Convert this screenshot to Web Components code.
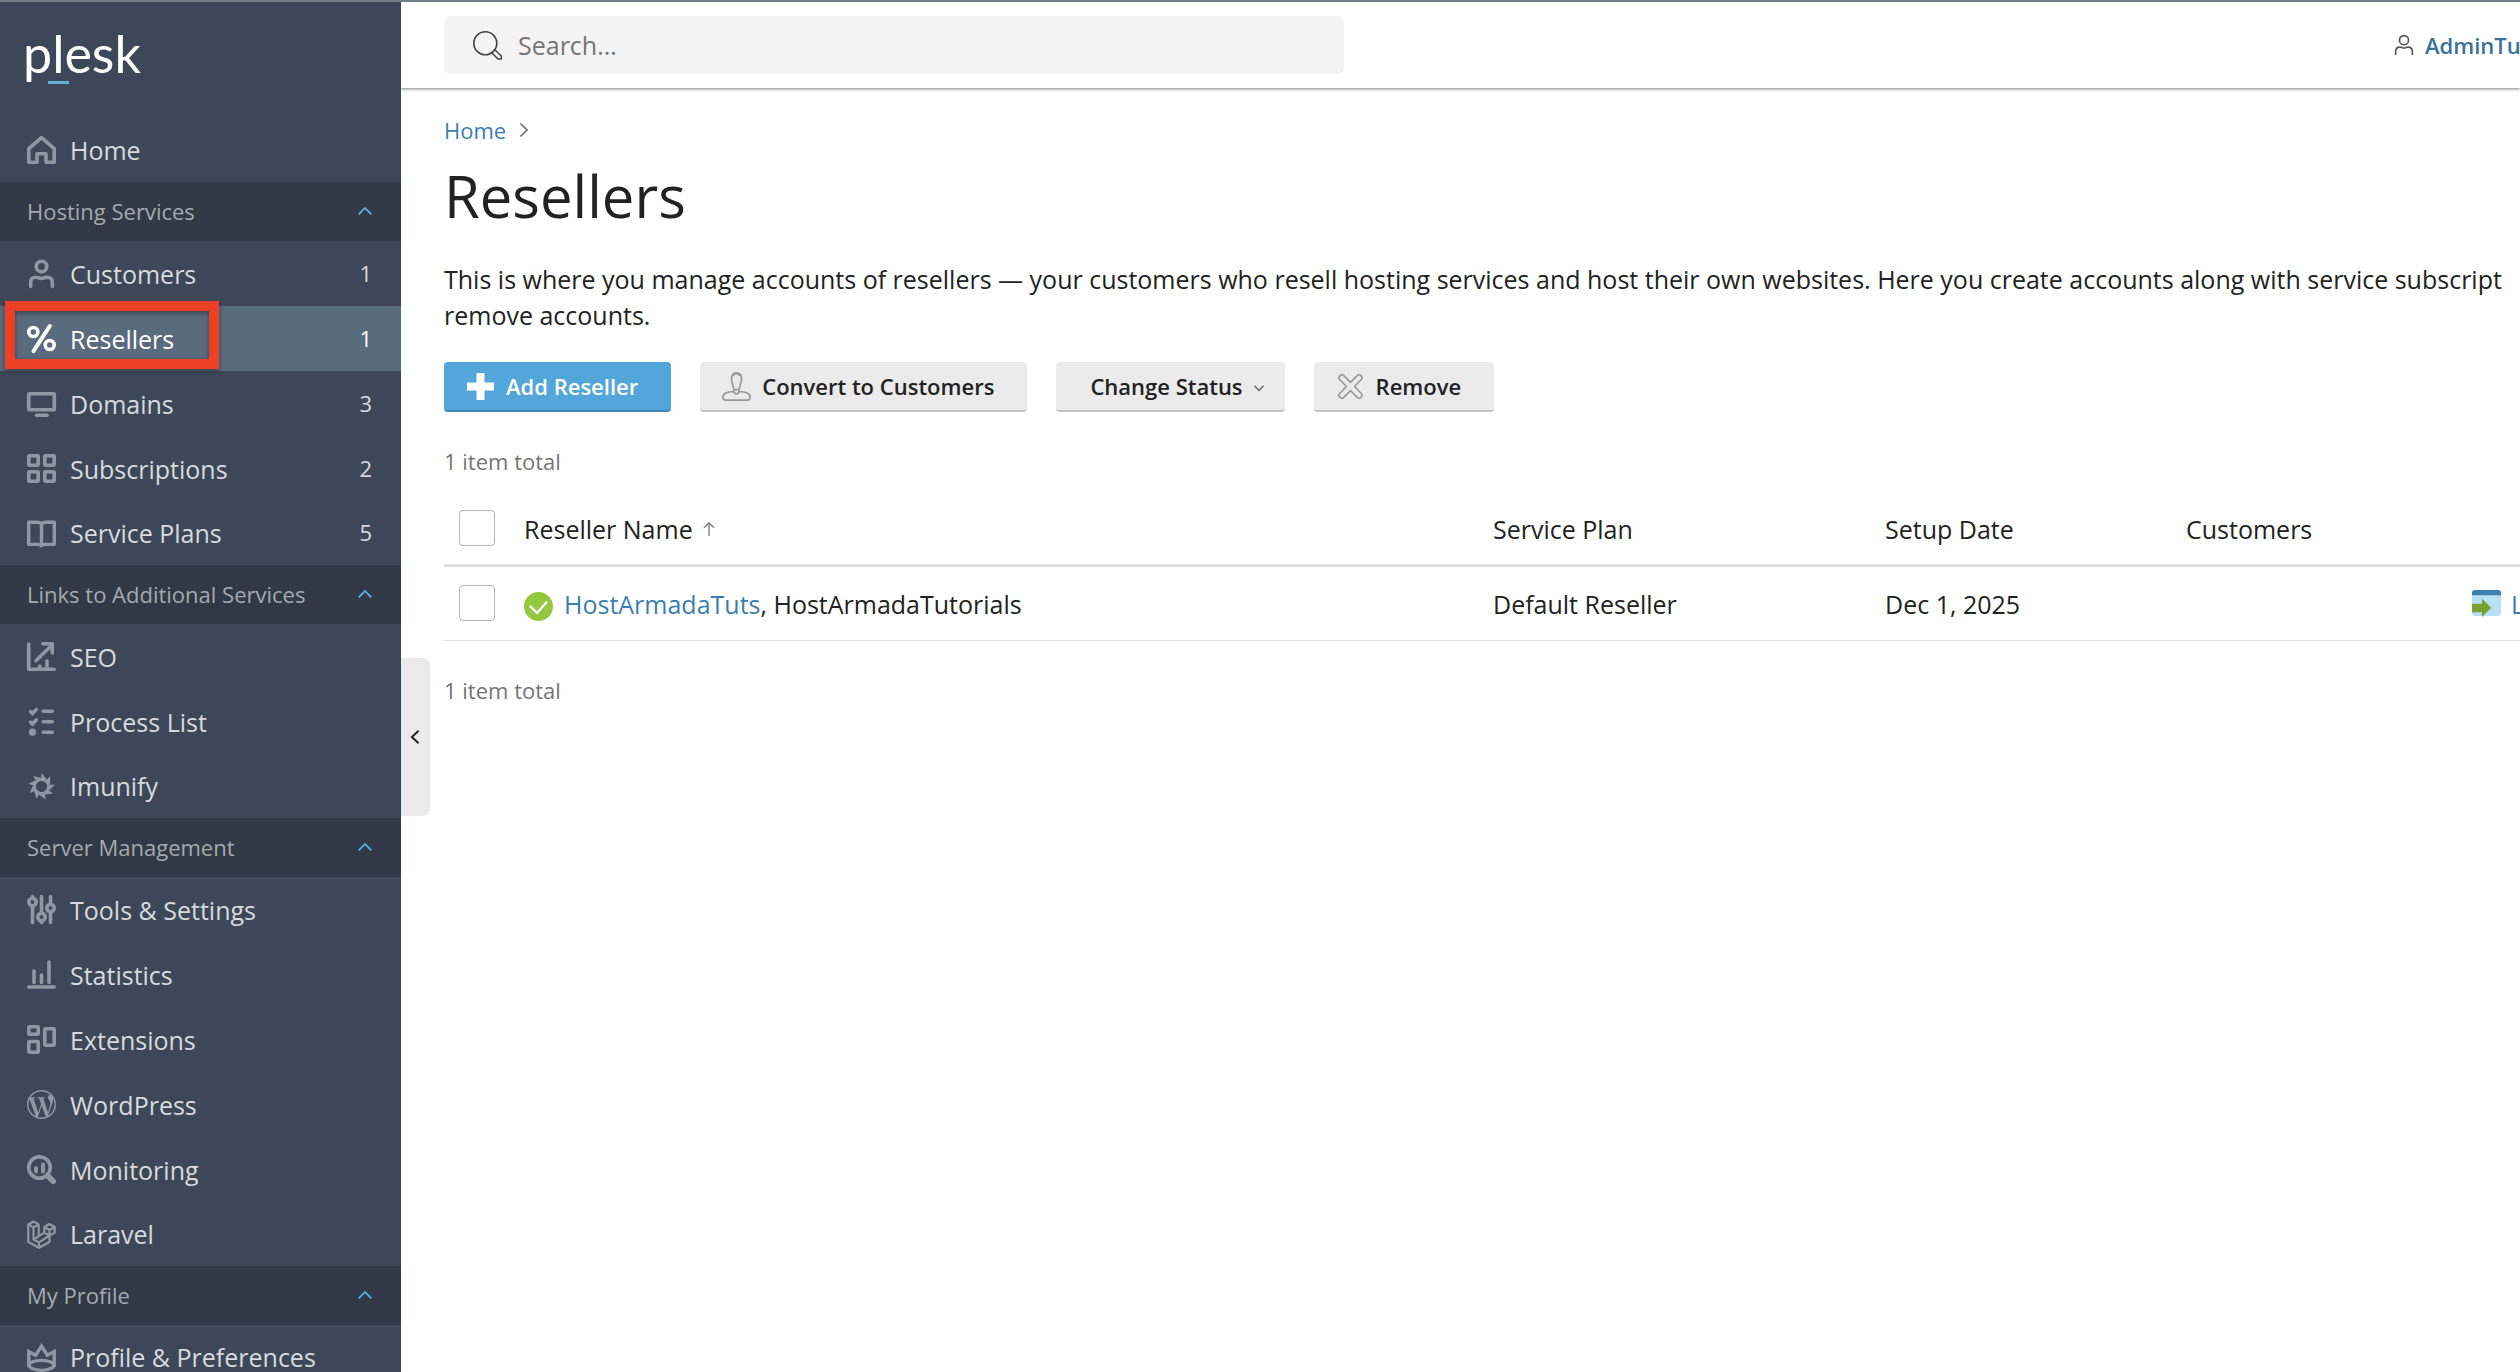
<!DOCTYPE html>
<html lang="en">
<head>
<meta charset="utf-8">
<title>Resellers - Plesk</title>
<style>
  html, body { margin: 0; height: 100%; }
  body { overflow: hidden; background: #fff; color: #222; font-family: "Open Sans", "Noto Sans", sans-serif; font-size: 25px; line-height: 36px; }
</style>
</head>
<body>
<pl-app>
  <pl-sidebar slot="sidebar">
    <pl-nav-item icon="home">Home</pl-nav-item>
    <pl-nav-section heading="Hosting Services">
      <pl-nav-item icon="user" count="1">Customers</pl-nav-item>
      <pl-nav-item icon="percent" count="1" active>Resellers</pl-nav-item>
      <pl-nav-item icon="monitor" count="3">Domains</pl-nav-item>
      <pl-nav-item icon="grid" count="2">Subscriptions</pl-nav-item>
      <pl-nav-item icon="book" count="5">Service Plans</pl-nav-item>
    </pl-nav-section>
    <pl-nav-section heading="Links to Additional Services">
      <pl-nav-item icon="seo">SEO</pl-nav-item>
      <pl-nav-item icon="tasks">Process List</pl-nav-item>
      <pl-nav-item icon="imunify">Imunify</pl-nav-item>
    </pl-nav-section>
    <pl-nav-section heading="Server Management">
      <pl-nav-item icon="sliders">Tools &amp; Settings</pl-nav-item>
      <pl-nav-item icon="stats">Statistics</pl-nav-item>
      <pl-nav-item icon="extensions">Extensions</pl-nav-item>
      <pl-nav-item icon="wordpress">WordPress</pl-nav-item>
      <pl-nav-item icon="monitoring">Monitoring</pl-nav-item>
      <pl-nav-item icon="laravel">Laravel</pl-nav-item>
    </pl-nav-section>
    <pl-nav-section heading="My Profile">
      <pl-nav-item icon="crown">Profile &amp; Preferences</pl-nav-item>
    </pl-nav-section>
  </pl-sidebar>
  <pl-topbar slot="topbar" user="AdminTuts"></pl-topbar>
  <pl-page heading="Resellers">
    <span slot="intro">This is where you manage accounts of resellers — your customers who resell hosting services and host their own websites. Here you create accounts along with service subscript<br>remove accounts.</span>
    <pl-button slot="actions" icon="plus" primary>Add Reseller</pl-button>
    <pl-button slot="actions" icon="stamp">Convert to Customers</pl-button>
    <pl-button slot="actions" menu>Change Status</pl-button>
    <pl-button slot="actions" icon="cross">Remove</pl-button>
    <pl-reseller-table></pl-reseller-table>
  </pl-page>
</pl-app>

<script>
const blades = Array.from({length: 9}, (_, i) =>
  `<path transform="rotate(${i * 40} 14.5 14.5)" fill="currentColor" d="M14.8 1 19.6 7.4 18.4 9.8 11.2 8.2 14 6.6Z"/>`).join('');

/* Every glyph is drawn on a 29-unit square. */
const ICONS = {
  home: '<path d="M1.8 13.6 14.5 2.6 27.2 13.6V27.2H19V18.8H10V27.2H1.8Z" stroke-width="3.6" stroke-linejoin="round"/>',
  user: '<circle cx="14.5" cy="7.6" r="5.3"/><path d="M3.7 27.4V23q0-4.8 5-4.8 2 0 3.200.6 2.600 1.200 5.200 0 1.200-.6 3.200-.6 5 0 5 4.800V27.400" stroke-linecap="round"/>',
  percent: '<circle cx="6.300" cy="8" r="4.500"/><circle cx="22.700" cy="21" r="4.500"/><path d="M22.800 2 6.500 27.200" stroke-linecap="round" stroke-width="4"/>',
  monitor: '<rect x="1.700" y="4.700" width="25.600" height="16" rx=".8"/><path d="M9.500 26.200H20" stroke-linecap="round"/>',
  grid: '<rect x="1.800" y="1.800" width="9.400" height="9.400" rx=".6"/><rect x="17.800" y="1.800" width="9.400" height="9.400" rx=".6"/><rect x="1.800" y="17.800" width="9.400" height="9.400" rx=".6"/><rect x="17.800" y="17.800" width="9.400" height="9.400" rx=".6"/>',
  book: '<path d="M14.500 4.800Q12.800 3.200 10.500 3.200H1.700V25.400H11Q13.200 25.400 14.500 26.800 15.800 25.400 18 25.400H27.300V3.200H18.500Q16.200 3.200 14.500 4.800ZV26.500" stroke-width="3.400" stroke-linejoin="round"/>',
  seo: '<path d="M1.700 2V27.200H27.200M9 18.500 24 4M16 1.800H25.300V11" stroke-linecap="round" stroke-linejoin="round"/><path d="M12.800 24V27M20 19V27" stroke-linecap="round"/>',
  tasks: '<path d="M16.200 4.200H25.200M16.200 14.700H25.200M16.200 25.200H25.200M3.500 4.600 5.500 6.400 9.300 2.600M3.500 15.100 5.500 16.900 9.300 13.100" stroke-linecap="round"/><circle cx="5.500" cy="25.200" r="3.600" fill="currentColor" stroke="none"/>',
  imunify: `<g stroke="none">${blades}</g>`,
  sliders: '<path d="M5.500 1.500V3M5.500 11V27.500M14.500 1.500V17.500M14.500 26V27.500M23.500 1.500V9M23.500 17V27.500" stroke-linecap="round"/><circle cx="5.500" cy="7" r="3.700"/><circle cx="14.500" cy="22" r="3.700"/><circle cx="23.500" cy="13" r="3.700"/>',
  stats: '<path d="M1.800 27H27.200M7 11V22.500M14.500 15V22.500M22 2V22.500" stroke-linecap="round"/>',
  extensions: '<rect x="1.800" y="1.800" width="9.400" height="7.400" rx=".6"/><rect x="1.800" y="16.500" width="9.400" height="10.700" rx=".6"/><rect x="17.800" y="3.800" width="9.400" height="16.400" rx=".6"/>',
  wordpress: '<path transform="scale(1.208)" stroke="none" fill="currentColor" d="M21.469 6.825c.84 1.537 1.318 3.3 1.318 5.175 0 3.979-2.156 7.456-5.363 9.325l3.295-9.527c.615-1.540.82-2.771.82-3.864 0-.405-.026-.78-.07-1.110m-7.981.105c.647-.03 1.232-.105 1.232-.105.582-.075.514-.93-.067-.899 0 0-1.755.135-2.880.135-1.064 0-2.850-.15-2.850-.15-.585-.03-.661.855-.075.885 0 0 .54.061 1.125.09l1.680 4.605-2.370 7.080L5.354 6.900c.649-.03 1.234-.1 1.234-.1.585-.075.516-.93-.065-.896 0 0-1.746.138-2.874.138-.2 0-.438-.008-.69-.015C4.911 3.150 8.235 1.215 12 1.215c2.809 0 5.365 1.072 7.286 2.833-.046-.003-.091-.009-.141-.009-1.060 0-1.812.923-1.812 1.914 0 .89.513 1.643 1.060 2.531.411.72.89 1.643.89 2.977 0 .915-.354 1.994-.821 3.479l-1.075 3.585-3.900-11.610zM12 22.784c-1.059 0-2.081-.153-3.048-.437l3.237-9.406 3.315 9.087c.024.053.05.101.078.149-1.120.393-2.325.609-3.582.609M1.211 12c0-1.564.336-3.050.935-4.390L7.290 21.709C3.694 19.960 1.212 16.271 1.211 12M12 0C5.385 0 0 5.385 0 12s5.385 12 12 12 12-5.385 12-12S18.615 0 12 0"/>',
  monitoring: '<circle cx="12.500" cy="12.500" r="10.800"/><path d="M20.500 20.500 26.200 26.200" stroke-width="5.600" stroke-linecap="round"/><path d="M9 13V16.500M16 9.500V16.500" stroke-width="3.800" stroke-linecap="round"/>',
  laravel: '<path stroke-width="2.200" stroke-linejoin="round" d="M1.300 4.500V22L12 27.800 22.500 22V15.500M1.300 4.500 6.500 1.500 11.700 4.500 6.500 7.400ZM6.500 7.400V19.500L12 22.400V27.800M11.700 4.500V16.300L6.500 19.500M17.300 7 22.500 4 27.700 7V12.600L22.500 15.500 17.300 12.600ZL22.500 10 27.700 7M22.500 10V15.500L12 22.400M17.300 12.600 6.500 19.500"/>',
  crown: '<path stroke-width="3.400" d="M1.800 24V8.600L8.600 12.200 14.500 3.200 20.400 12.200 27.200 8.600V24"/><ellipse cx="14.500" cy="22.300" rx="12.400" ry="5" stroke-width="3.200"/>',
  search: '<circle cx="12.300" cy="12.300" r="11.500" stroke-width="1.600"/><path stroke-width="1.500" stroke-linejoin="round" d="M18 21 25 28H28.300V25L21 18"/>',
  person: '<circle cx="14.500" cy="7.500" r="6.600" stroke-width="2.400"/><path stroke-width="2.400" d="M2.400 29V24Q2.400 17.500 8.500 17.500 11 17.500 12.500 18.500 14.500 19.600 16.500 18.500 18 17.500 20.500 17.500 26.600 17.500 26.600 24V29"/>',
  plus: '<path fill="currentColor" stroke="none" d="M10.500 1H18.500V10.500H28V18.500H18.500V28H10.500V18.500H1V10.500H10.500Z"/>',
  stamp: '<path stroke-width="1.700" stroke-linejoin="round" d="M11.900 18.800C12 15 9.500 10.500 9.500 6.500 9.500 2.800 11.500.9 14.500.9S19.500 2.800 19.500 6.500C19.500 10.500 17 15 17.100 18.800 17.100 23 11.900 23 11.900 18.800ZM11.800 17.600H17.200M11.700 19.500C6 19.800.9 20.500.9 25.300Q.9 28.100 4 28.100H25Q28.100 28.100 28.100 25.300C28.100 20.500 23 19.800 17.300 19.500"/><path stroke-width="2.200" d="M10.800 3.500Q14.500-.8 18.200 3.500"/>',
  cross: '<path stroke-width="1.700" stroke-linejoin="round" d="M14.500 10.300 21.700 3.100Q23 2 24.200 3.100L25.700 4.600Q26.900 5.800 25.700 7L18.600 14.500 25.700 22Q26.900 23.200 25.700 24.400L24.200 25.900Q23 27 21.700 25.900L14.500 18.700 7.300 25.900Q6 27 4.800 25.900L3.300 24.400Q2.100 23.200 3.300 22L10.400 14.500 3.300 7Q2.100 5.800 3.300 4.600L4.800 3.100Q6 2 7.300 3.100Z"/>',
  ok: '<circle cx="14.500" cy="14.500" r="14.500" fill="#93c83e" stroke="none"/><path stroke="#fff" stroke-width="2.400" stroke-linecap="round" stroke-linejoin="round" d="M6.500 14.500 13 21 22.500 10.200"/>',
  login: '<rect y="1" width="29" height="26" rx="3" fill="#b8e1f6" stroke="none"/><path fill="#3d80b2" stroke="none" d="M0 6.300V4Q0 1 3 1H26Q29 1 29 4V6.300Z"/><path fill="#78a22f" stroke="none" d="M0 14.800H10V9.700L19.200 18.800 10 28V23.200H0Z"/>',
  up: '<path stroke-width="3.400" d="M1.500 21.500 14.500 8 27.500 21.500"/>',
  down: '<path stroke-width="4" d="M1.500 8 14.500 21.500 27.500 8"/>',
  right: '<path stroke-width="3.200" d="M7 1 21 14.500 7 28"/>',
  left: '<path stroke-width="4" d="M22 1.500 8 14.500 22 27.500"/>',
  sort: '<path stroke-width="3" d="M14.500 29V2M4 12 14.500 1.800 25 12"/>'
};

class PlElement extends HTMLElement {
  connectedCallback() {
    if (!this.shadowRoot) this.attachShadow({mode: 'open'}).innerHTML = `<style>${this.css()}</style>${this.html()}`;
  }
}
const define = (name, css, html) => customElements.define(name, class extends PlElement {
  css() { return css; }
  html() { return html(this); }
});
const attr = (el, name) => el.getAttribute(name) || '';

define('pl-icon', `
  :host { display: inline-block; flex: none; width: 29px; height: 29px; }
  svg { display: block; width: 100%; height: 100%; fill: none; stroke: currentColor; stroke-width: 3.6; overflow: visible; }`,
  el => `<svg viewBox="0 0 29 29" aria-hidden="true">${ICONS[attr(el, 'name')]}</svg>`);

define('pl-app', `
  :host { display: flex; box-sizing: border-box; height: 100vh; border-top: 2px solid #727c84; overflow: hidden; }
  .side { flex: none; position: relative; z-index: 2; }
  .main { flex: 1; min-width: 0; overflow: hidden; }
  .handle { position: absolute; left: 100%; top: 656px; width: 29px; height: 158px; padding: 0 2px 0 0; border: 0; border-radius: 0 8px 8px 0; background: #eaeaea; color: #222; display: flex; align-items: center; justify-content: center; }
  .handle pl-icon { width: 14px; height: 14px; }`,
  () => `<div class="side"><slot name="sidebar"></slot><button class="handle" aria-label="Collapse menu"><pl-icon name="left"></pl-icon></button></div>
  <div class="main"><slot name="topbar"></slot><slot></slot></div>`);

define('pl-sidebar', `
  :host { display: block; width: 401px; min-height: 100%; background: #3c4858; }
  .logo { display: block; position: relative; box-sizing: border-box; height: 115px; padding: 21px 0 0 23px; color: #fff; text-decoration: none; font: 400 52px/60px Lato, sans-serif; }
  .logo::after { content: ""; position: absolute; left: 48px; top: 79px; width: 21px; height: 3px; background: #65b2d4; }`,
  () => `<a class="logo" href="#">plesk</a><nav><slot></slot></nav>`);

define('pl-nav-section', `
  :host { display: block; }
  button { display: flex; align-items: center; justify-content: space-between; box-sizing: border-box; width: 100%; height: 59px; padding: 0 29px 2px 27px; border: 0; background: #303945; color: #a5a9ae; font: inherit; font-size: 22px; line-height: 30px; }
  pl-icon { width: 14px; height: 14px; color: #5db4ec; }`,
  el => `<button aria-expanded="true"><span>${attr(el, 'heading')}</span><pl-icon name="up"></pl-icon></button><slot></slot>`);

define('pl-nav-item', `
  :host { display: block; position: relative; }
  a { display: flex; align-items: center; gap: 14px; box-sizing: border-box; height: 65px; padding: 0 29px 0 27px; color: #d8dade; text-decoration: none; }
  :host(:last-child) a { height: 64px; }
  pl-icon { color: #8f98a2; }
  .label { flex: 1; }
  .count { padding-bottom: 2px; font-size: 22px; line-height: 30px; }
  :host([active]) { z-index: 1; }
  :host([active]) a { background: #5a6b7d; color: #fff; }
  :host([active]) pl-icon { color: #fff; }
  .mark { position: absolute; left: 5px; top: -5px; box-sizing: border-box; width: 214px; height: 68px; border: 10px solid #ea4126; box-shadow: 0 2px 4px rgba(0,0,0,.4), inset 0 2px 5px rgba(0,0,0,.4); pointer-events: none; }`,
  el => `<a href="#"><pl-icon name="${attr(el, 'icon')}"></pl-icon><span class="label"><slot></slot></span>${el.hasAttribute('count') ? `<span class="count">${attr(el, 'count')}</span>` : ''}</a>${el.hasAttribute('active') ? '<div class="mark"></div>' : ''}`);

define('pl-topbar', `
  :host { display: flex; align-items: center; justify-content: space-between; box-sizing: border-box; height: 86px; padding-left: 43px; background: #fff; position: relative; box-shadow: 0 1px 3px rgba(0,0,0,.5); }
  label { display: flex; align-items: center; gap: 16px; box-sizing: border-box; width: 900px; height: 58px; padding-left: 29px; border-radius: 6px; background: #f4f4f4; color: #444; }
  input { flex: 1; min-width: 0; padding: 0; border: 0; outline: 0; background: none; font: inherit; color: #222; }
  input::placeholder { color: #757575; opacity: 1; }
  a { display: flex; flex: none; align-items: center; gap: 11px; width: 126px; overflow: hidden; white-space: nowrap; color: #3a7399; font-size: 22px; line-height: 30px; font-weight: 600; text-decoration: none; }
  a pl-icon { width: 20px; height: 22px; color: #555; }`,
  el => `<label><pl-icon name="search"></pl-icon><input type="search" placeholder="Search..." aria-label="Search"></label>
  <a href="#"><pl-icon name="person"></pl-icon><span>${attr(el, 'user')}</span></a>`);

define('pl-page', `
  :host { display: block; padding: 27px 0 0 43px; }
  .crumbs { display: flex; align-items: center; gap: 11px; font-size: 22px; line-height: 30px; }
  .crumbs a { color: #3a7fb0; text-decoration: none; }
  .crumbs pl-icon { width: 14px; height: 14px; color: #666; }
  h1 { margin: 16px 0 30px; font-size: 58px; line-height: 70px; font-weight: 400; }
  p { margin: 0 0 29px; white-space: nowrap; }
  .actions { display: flex; gap: 29px; }`,
  el => `<nav class="crumbs" aria-label="Breadcrumbs"><a href="#">Home</a><pl-icon name="right"></pl-icon></nav>
  <h1>${attr(el, 'heading')}</h1><p><slot name="intro"></slot></p>
  <div class="actions"><slot name="actions"></slot></div><slot></slot>`);

define('pl-button', `
  :host { display: block; }
  button { display: flex; align-items: center; gap: 11px; box-sizing: border-box; height: 50px; padding: 0 33px 0 22px; border: 0; border-bottom: 2px solid #c2c2c2; border-radius: 4px; background: #ebebeb; color: #222; font: inherit; font-size: 22px; line-height: 30px; font-weight: 600; white-space: nowrap; }
  pl-icon { color: #9a9a9a; }
  :host([menu]) button { padding: 0 21px 0 34px; }
  :host([menu]) pl-icon { width: 10px; height: 10px; padding-top: 3px; color: #666; }
  :host([primary]) button { background: #53a6da; border-bottom-color: #3c85b4; color: #fff; }
  :host([primary]) pl-icon { color: #fff; }`,
  el => `<button>${el.hasAttribute('icon') ? `<pl-icon name="${attr(el, 'icon')}"></pl-icon>` : ''}<span><slot></slot></span>${el.hasAttribute('menu') ? '<pl-icon name="down"></pl-icon>' : ''}</button>`);

define('pl-reseller-table', `
  :host { display: block; }
  .total { margin: 34px 0 0; font-size: 22px; line-height: 30px; color: #757575; }
  table { width: 100%; margin-top: 18px; border-spacing: 0; table-layout: fixed; }
  th, td { padding: 0; text-align: left; font-weight: 400; white-space: nowrap; vertical-align: middle; }
  th { height: 70px; border-bottom: 3px solid #dedede; }
  td { height: 73px; border-bottom: 1px solid #dedede; }
  .pick { width: 80px; padding-bottom: 2px; box-sizing: border-box; }
  th.pick { height: 68px; } td.pick { height: 71px; }
  .plan { width: 392px; } .date { width: 301px; } .cust { width: 286px; } .act { width: 48px; }
  input { appearance: none; display: block; box-sizing: border-box; width: 36px; height: 36px; margin: 0 0 0 15px; border: 1px solid #b4b4b4; border-radius: 4px; background: #fff; }
  a { color: #3a7fb0; text-decoration: none; }
  .line { display: flex; align-items: center; }
  .line pl-icon { margin-right: 10px; }
  .line pl-icon[name="ok"] { padding-top: 5px; margin-right: 11px; }
  th .line { gap: 9px; }
  th pl-icon { width: 14px; height: 14px; color: #888; }
  .clip { overflow: hidden; }`,
  () => `<p class="total">1 item total</p>
  <table>
    <thead><tr>
      <th class="pick"><input type="checkbox" aria-label="Select all"></th>
      <th><div class="line">Reseller Name<pl-icon name="sort"></pl-icon></div></th>
      <th class="plan">Service Plan</th><th class="date">Setup Date</th><th class="cust">Customers</th><th class="act"></th>
    </tr></thead>
    <tbody><tr>
      <td class="pick"><input type="checkbox" aria-label="Select HostArmadaTuts"></td>
      <td><div class="line"><pl-icon name="ok"></pl-icon><span><a href="#">HostArmadaTuts</a>, HostArmadaTutorials</span></div></td>
      <td>Default Reseller</td><td>Dec 1, 2025</td><td></td>
      <td class="clip"><a class="line" href="#"><pl-icon name="login"></pl-icon>Log in</a></td>
    </tr></tbody>
  </table>
  <p class="total">1 item total</p>`);
</script>
</body>
</html>
